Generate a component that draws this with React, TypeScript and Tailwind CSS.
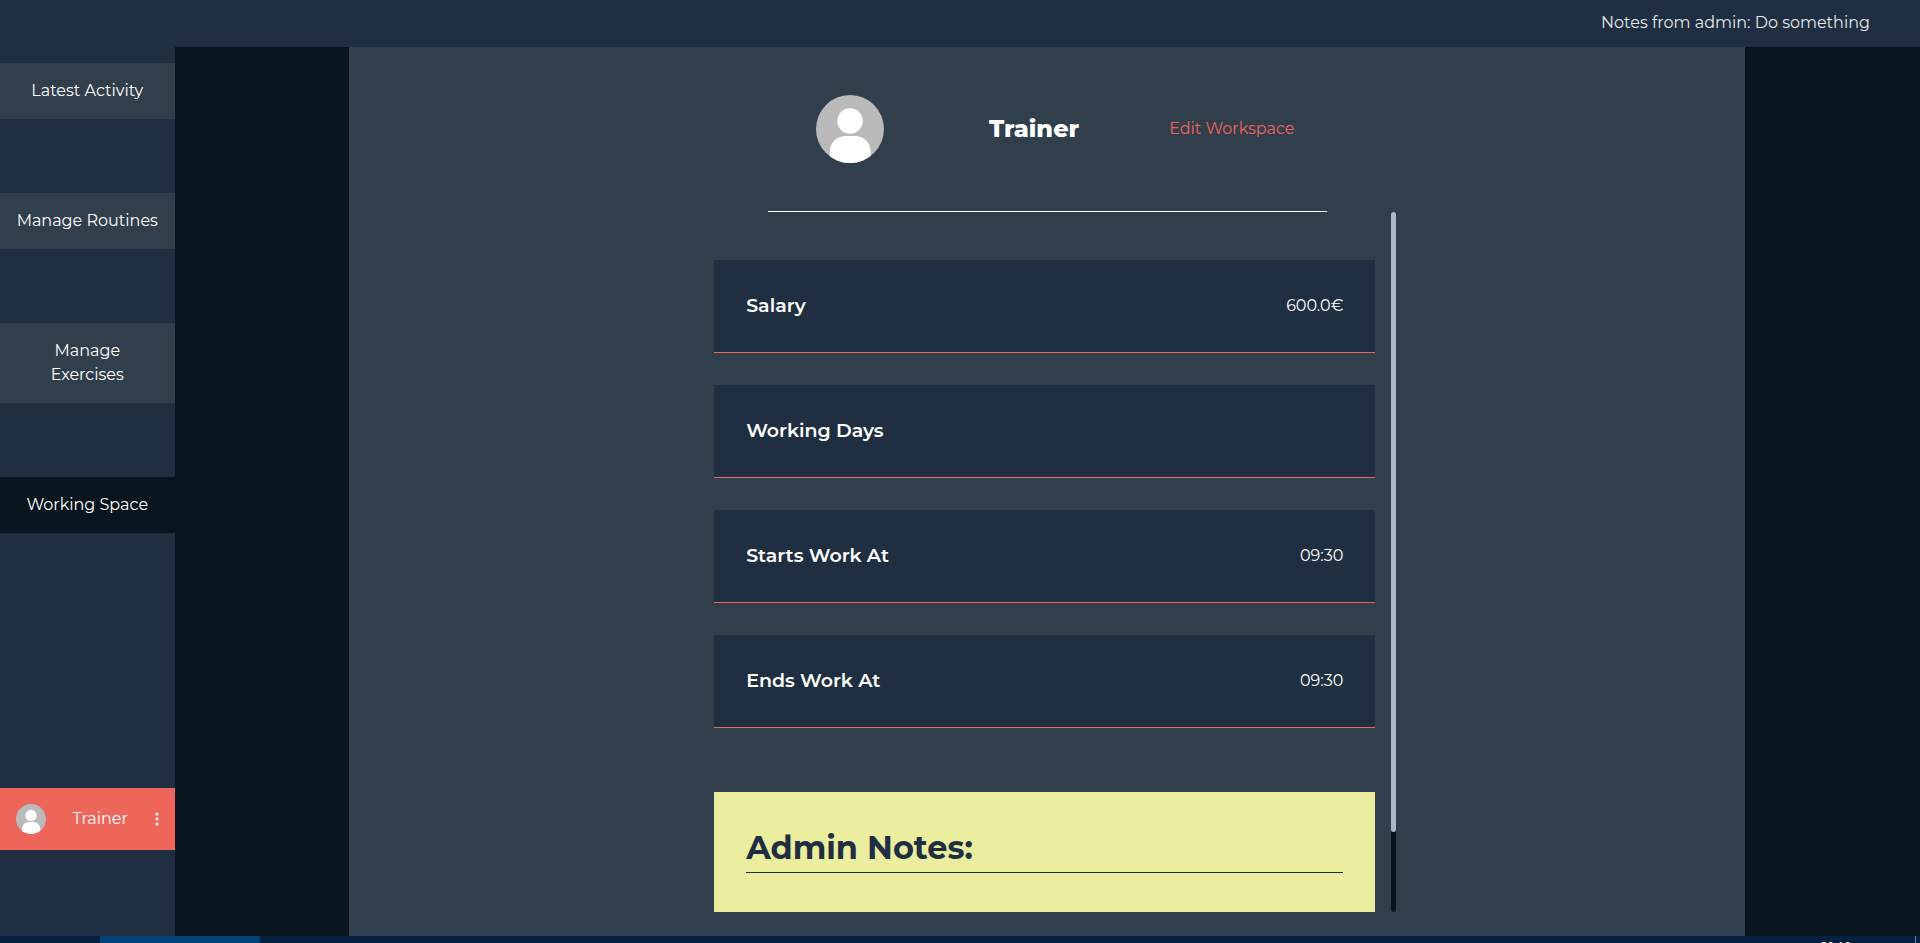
import React from "react";

const routes = [
  { label: "Latest Activity", active: false },
  { label: "Manage Routines", active: false },
  { label: "Manage Exercises", active: false },
  { label: "Working Space", active: true },
];

const details = [
  { label: "Salary", value: "600.0€" },
  { label: "Working Days", value: "" },
  { label: "Starts Work At", value: "09:30" },
  { label: "Ends Work At", value: "09:30" },
];

function Avatar({ className }: { className: string }) {
  return (
    <svg viewBox="0 0 68 68" className={className} role="img" aria-label="Trainer avatar">
      <clipPath id="avatar-circle">
        <circle cx="34" cy="34" r="34" />
      </clipPath>
      <g clipPath="url(#avatar-circle)">
        <rect width="68" height="68" fill="#bababa" />
        <circle cx="34" cy="26" r="12.700" fill="#fff" />
        <path d="M13.700 70V57C13.700 48 20 41 30 41H38.500C48.500 41 54.700 48 54.700 57V70Z" fill="#fff" />
      </g>
    </svg>
  );
}

function Sidebar() {
  return (
    <aside className="flex w-1/11 shrink-0 flex-col bg-[#1f2f41] pt-4">
      <nav className="flex flex-col gap-[74px]">
        {routes.map((route) => (
          <a
            key={route.label}
            href="#"
            aria-current={route.active ? "page" : undefined}
            className={
              route.active
                ? "bg-[#08151f] px-4 py-4 text-center"
                : "bg-[#313e4b] px-4 py-4 text-center"
            }
          >
            {route.label}
          </a>
        ))}
      </nav>
      <button className="mt-auto mb-[86px] flex items-center justify-between bg-[#ee6559] p-4">
        <Avatar className="size-[30px]" />
        <span>Trainer</span>
        <svg viewBox="0 0 4 14" className="h-[14px] w-1" fill="#fff" aria-hidden="true">
          <circle cx="2" cy="2" r="1.500" />
          <circle cx="2" cy="7" r="1.500" />
          <circle cx="2" cy="12" r="1.500" />
        </svg>
      </button>
    </aside>
  );
}

function Workspace() {
  return (
    <main className="flex min-w-0 flex-1 justify-center bg-[#08151f]">
      <section className="flex w-4/5 flex-col items-center bg-[#313e4b] pb-6">
        <header className="flex w-2/5 items-center border-b border-white py-12 pr-8 pl-12">
          <Avatar className="size-[68px] shrink-0" />
          <h1 className="ml-[105px] text-2xl font-extrabold">Trainer</h1>
          <a href="#" className="ml-auto whitespace-nowrap text-[#ee6559]">
            Edit Workspace
          </a>
        </header>
        <div className="flex min-h-0 w-1/2 flex-1">
          <div className="min-w-0 flex-1 overflow-hidden px-4 pt-12">
            <dl className="flex flex-col gap-8">
              {details.map((detail) => (
                <div
                  key={detail.label}
                  className="flex h-[93px] items-center justify-between border-b border-[#ee6559] bg-[#1f2f41] px-8"
                >
                  <dt className="text-[19px] font-semibold">{detail.label}</dt>
                  <dd>{detail.value}</dd>
                </div>
              ))}
            </dl>
            <article className="mt-16 h-[200px] bg-[#ecee9f] p-8 text-[#1f2f41]">
              <h2 className="border-b border-[#1f2f41] text-[32px] leading-12 font-bold">
                Admin Notes:
              </h2>
            </article>
          </div>
          <div className="w-[5px] shrink-0 rounded-full bg-[#08151f]" aria-hidden="true">
            <div className="h-[620px] rounded-full bg-[#a9b8c8]" />
          </div>
        </div>
      </section>
    </main>
  );
}

function Taskbar() {
  return (
    <footer className="flex h-[7px] shrink-0 overflow-hidden bg-[#04203e] pl-[100px] text-xs leading-4">
      <div className="w-40 bg-[#04427a]" />
      <time className="mt-[3px] mr-16 ml-auto font-['Open_Sans',sans-serif]">20:10</time>
      <div className="mr-1 w-px bg-[#6c8096]" />
    </footer>
  );
}

export default function App() {
  return (
    <div className="flex h-screen flex-col overflow-hidden bg-[#08151f] font-['Montserrat','Inter',sans-serif] text-base leading-6 text-white">
      <header className="flex h-[47px] shrink-0 items-start justify-end bg-[#1f2f41] pt-[11px] pr-[50px] text-[#e4e6e8]">
        <p>Notes from admin: Do something</p>
      </header>
      <div className="flex min-h-0 flex-1">
        <Sidebar />
        <Workspace />
      </div>
      <Taskbar />
    </div>
  );
}
